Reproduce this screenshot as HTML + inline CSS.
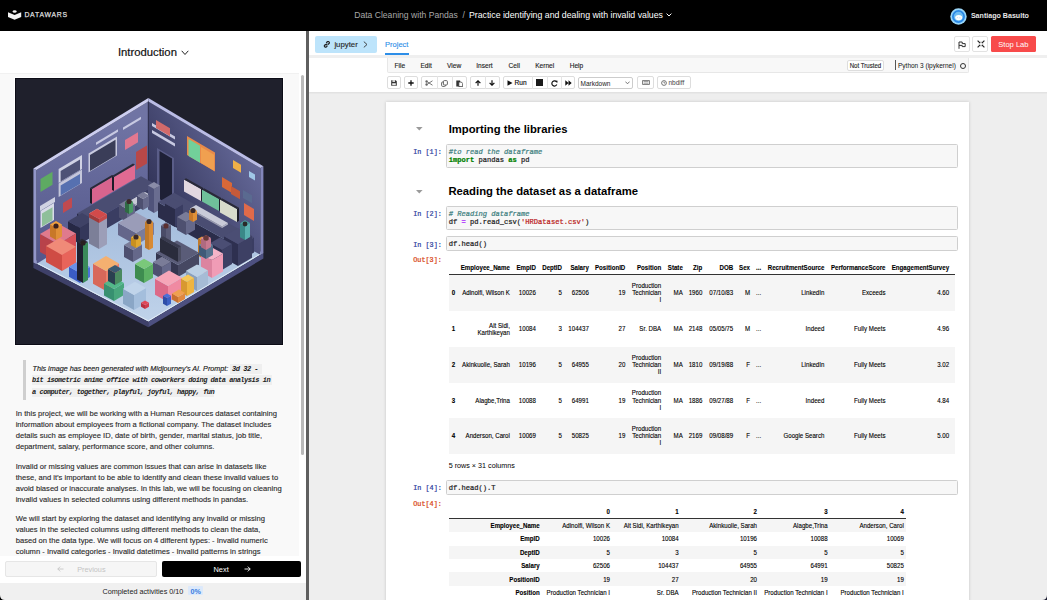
<!DOCTYPE html>
<html><head><meta charset="utf-8">
<style>
*{box-sizing:border-box;margin:0;padding:0}
html,body{width:1047px;height:600px;overflow:hidden;background:#fff;font-family:"Liberation Sans",sans-serif;color:#222}
.a{position:absolute;white-space:pre}
#top{position:absolute;left:0;top:0;width:1047px;height:31px;background:#000}
#left{position:absolute;left:0;top:31px;width:306px;height:569px;background:#fff}
#lhead{position:absolute;left:0;top:0;width:306px;height:41px;background:#fff}
#lcontent{position:absolute;left:0;top:41px;width:299px;height:484px;background:#f9f9f9;overflow:hidden}
#divider{position:absolute;left:306px;top:31px;width:3px;height:569px;background:#5f5f5f}
#right{position:absolute;left:309px;top:31px;width:738px;height:569px;background:#eee;overflow:hidden}
.p{position:absolute;left:15.7px;font-size:7.6px;color:#2a2a2a;-webkit-text-stroke:0.12px #2a2a2a;white-space:pre;line-height:11.1px}
.btn{position:absolute;border:1px solid #ddd;border-radius:2px;background:#fff}
.mono{font-family:"Liberation Mono",monospace}
.cellbox{position:absolute;left:445.5px;width:513px;background:#f7f7f7;border:1px solid #cfcfcf;border-radius:1px}
.prompt{position:absolute;font-family:"Liberation Mono",monospace;font-size:6.8px;color:#303f9f;white-space:pre;text-align:right}
.oprompt{color:#d84315}
.code{position:absolute;font-family:"Liberation Mono",monospace;font-size:7.1px;color:#000;white-space:pre;line-height:8.6px}
.h{position:absolute;font-weight:bold;font-size:11.3px;color:#000;white-space:pre}
.tri{position:absolute;width:0;height:0;border-left:3.3px solid transparent;border-right:3.3px solid transparent;border-top:3.6px solid #999}
.t{position:absolute;font-size:6.15px;color:#000;white-space:pre;text-align:right;line-height:7.1px}
.tb{font-weight:bold}
</style></head><body>

<!-- TOP BAR -->
<div id="top">
  <svg style="position:absolute;left:8px;top:10px" width="14" height="10" viewBox="0 0 14 10">
    <path d="M0 2.3 L6.6 4.9 L13.2 2.3 L13.2 6.9 L6.6 9.8 L0 6.9 Z" fill="#f2f2f2"/>
    <ellipse cx="6.6" cy="1.5" rx="2" ry="1.25" fill="#f2f2f2"/>
  </svg>
  <div class="a" style="left:24.4px;top:11.4px;font-size:6.9px;font-weight:normal;-webkit-text-stroke:0.25px #ddd;color:#ddd;letter-spacing:0.75px;line-height:7px">DATAWARS</div>
  <div class="a" style="left:354.2px;top:10px;font-size:8.6px;color:#a8a8a8;line-height:10px">Data Cleaning with Pandas</div>
  <div class="a" style="left:462.5px;top:10px;font-size:8.6px;color:#a8a8a8;line-height:10px">/</div>
  <div class="a" style="left:468.9px;top:10px;font-size:8.75px;color:#fff;line-height:10px">Practice identifying and dealing with invalid values</div>
  <svg style="position:absolute;left:665.5px;top:13px" width="6" height="4" viewBox="0 0 6 4"><path d="M0.6 0.6 L3 3 L5.4 0.6" stroke="#fff" stroke-width="1" fill="none"/></svg>
  <svg style="position:absolute;left:950px;top:7.6px" width="17" height="17" viewBox="0 0 17 17">
    <circle cx="8.5" cy="8.5" r="8.2" fill="#9ad6f8"/>
    <circle cx="8.5" cy="8.5" r="5.6" fill="#6fbdf2" stroke="#2a88e6" stroke-width="1.8"/>
    <ellipse cx="8.7" cy="9.6" rx="3.5" ry="2.6" fill="#fff"/>
    <path d="M6.8 10 Q7.5 9.2 8.2 10 M9.2 10 Q9.9 9.2 10.6 10" stroke="#9cc8ee" stroke-width="0.6" fill="none"/>
  </svg>
  <div class="a" style="left:970.9px;top:11.5px;font-size:7.1px;font-weight:bold;color:#e6e6e6;line-height:8px">Santiago Basulto</div>
</div>

<!-- LEFT PANEL -->
<div id="left">
  <div id="lhead">
    <div class="a" style="left:117.9px;top:15px;font-size:11.3px;color:#111;-webkit-text-stroke:0.2px #111;line-height:13px">Introduction</div>
    <svg style="position:absolute;left:180.5px;top:19px" width="8" height="6" viewBox="0 0 8 6"><path d="M0.7 0.8 L4 4.5 L7.3 0.8" stroke="#222" stroke-width="1" fill="none"/></svg>
  </div>
  <div id="lcontent"><div style="position:absolute;left:0;top:0;width:299px;height:1.2px;background:#fff"></div><div style="position:absolute;left:0;top:1.2px;width:299px;height:0.8px;background:#f1f1f1"></div>
    <!-- image placeholder -->
    <div id="imgwrap" style="position:absolute;left:15px;top:6px;width:268px;height:267px;background:#1f202c;overflow:hidden;box-shadow:0 0 0 1px #fff"><svg width="268" height="267" viewBox="0 0 268 267" style="position:absolute;left:0;top:0"><defs><linearGradient id="lw" gradientUnits="userSpaceOnUse" x1="60" y1="40" x2="60" y2="190"><stop offset="0" stop-color="#7074a4"/><stop offset="1" stop-color="#52568a"/></linearGradient><linearGradient id="rw" gradientUnits="userSpaceOnUse" x1="140" y1="120" x2="250" y2="60"><stop offset="0" stop-color="#33355a"/><stop offset="1" stop-color="#6e72a4"/></linearGradient><linearGradient id="fl" gradientUnits="userSpaceOnUse" x1="0" y1="120" x2="0" y2="245"><stop offset="0" stop-color="#a0b9da"/><stop offset="1" stop-color="#c0d3ea"/></linearGradient></defs><polygon points="18.4,184.3 133.3,243.7 248.4,175.0 133.3,116.0" fill="url(#fl)"/><polygon points="18.4,184.3 133.3,243.7 133.3,249.2 18.4,190.0" fill="#3e4069"/><polygon points="133.3,243.7 248.4,175.0 248.4,180.5 133.3,249.2" fill="#4d5080"/><polyline points="21.0,184.5 133.3,242.8 246.0,175.5" fill="none" stroke="#e4edf7" stroke-width="0.9"/><polygon points="21.4,92.0 133.3,23.5 133.3,116.0 21.4,186.0" fill="url(#lw)"/><polygon points="133.3,23.5 245.4,90.1 245.4,176.8 133.3,116.0" fill="url(#rw)"/><polygon points="18.4,90.4 21.4,92.0 21.4,186.0 18.4,184.3" fill="#9296c8"/><polygon points="245.4,90.1 248.4,88.3 248.4,175.0 245.4,176.8" fill="#8386ba"/><polygon points="18.4,90.4 133.3,20.0 133.3,23.5 21.4,92.0" fill="#cdcef0"/><polygon points="133.3,20.0 248.4,88.3 245.4,90.1 133.3,23.5" fill="#babce6"/><polygon points="132.8,23.5 133.8,23.5 133.8,116.0 132.8,116.0" fill="#2c2e4c"/><polygon points="43.6,105.0 67.0,91.0 67.0,77.0 43.6,91.0" fill="#d0d2e4"/><polygon points="45.6,103.5 65.0,91.9 65.0,81.4 45.6,93.0" fill="#4e5276"/><polygon points="43.6,119.0 67.0,105.0 67.0,91.5 43.6,105.5" fill="#c4c6da"/><polygon points="45.6,117.5 65.0,105.9 65.0,95.9 45.6,107.5" fill="#5670b0"/><polygon points="73.5,94.5 102.0,77.4 102.0,58.4 73.5,75.5" fill="#c9cbe0"/><polygon points="75.0,93.0 100.5,77.7 100.5,61.7 75.0,77.0" fill="#3a3d58"/><polygon points="25.5,114.0 37.5,106.8 37.5,93.8 25.5,101.0" fill="#5eaa62"/><polygon points="25.0,133.0 40.0,124.0 40.0,119.0 25.0,128.0" fill="#cfd1e2"/><polygon points="25.5,150.0 39.0,141.9 39.0,124.9 25.5,133.0" fill="#d8dae8"/><polygon points="27.0,148.5 37.5,142.2 37.5,129.2 27.0,135.5" fill="#8fbf9a"/><polygon points="48.0,135.0 57.0,129.6 57.0,119.6 48.0,125.0" fill="#c04a50"/><polygon points="110.0,72.0 123.0,64.2 123.0,54.2 110.0,62.0" fill="#e27890"/><polygon points="121.0,92.0 132.0,85.4 132.0,67.4 121.0,74.0" fill="#b84848"/><polygon points="81.0,67.0 103.0,53.8 103.0,51.3 81.0,64.5" fill="#c7c9e2"/><polygon points="108.0,52.0 126.0,41.2 126.0,38.7 108.0,49.5" fill="#c7c9e2"/><polygon points="142.0,122.0 159.0,132.0 159.0,80.0 142.0,70.0" fill="#5a5d88"/><polygon points="144.5,121.0 157.0,128.4 157.0,80.4 144.5,73.0" fill="#1e2036"/><polygon points="137.0,48.0 160.0,61.6 160.0,58.6 137.0,45.0" fill="#c7c9e2"/><polygon points="137.0,55.0 160.0,68.6 160.0,65.6 137.0,52.0" fill="#c7c9e2"/><polygon points="141.0,50.0 155.0,58.3 155.0,50.3 141.0,42.0" fill="#d26a6a"/><polygon points="172.0,77.0 200.0,93.5 200.0,74.5 172.0,58.0" fill="#e88a4a"/><polygon points="173.5,78.0 185.0,84.8 185.0,67.8 173.5,61.0" fill="#72d09a"/><polygon points="186.0,85.0 199.0,92.7 199.0,76.7 186.0,69.0" fill="#f0a050"/><polygon points="207.0,109.0 217.0,114.9 217.0,104.9 207.0,99.0" fill="#d86838"/><polygon points="216.0,116.0 225.0,121.3 225.0,113.3 216.0,108.0" fill="#c55a3a"/><polygon points="228.0,120.0 237.0,125.3 237.0,117.3 228.0,112.0" fill="#5a6a90"/><polygon points="229.0,137.0 239.0,142.9 239.0,130.9 229.0,125.0" fill="#e06a4a"/><polygon points="218.0,90.0 226.0,94.7 226.0,86.7 218.0,82.0" fill="#f0b048"/><polygon points="234.0,99.0 240.0,102.5 240.0,96.5 234.0,93.0" fill="#a0c8e8"/><polygon points="62.0,150.6 77.0,159.0 77.0,144.0 62.0,135.6" fill="#2b2d4a"/><polygon points="77.0,159.0 141.0,121.6 141.0,106.6 77.0,144.0" fill="#3a3d62"/><polygon points="62.0,135.6 77.0,144.0 141.0,106.6 126.0,98.2" fill="#4a4d72"/><polygon points="53.0,159.3 65.0,166.0 65.0,150.0 53.0,143.3" fill="#262844"/><polygon points="65.0,166.0 79.0,157.8 79.0,141.8 65.0,150.0" fill="#34375a"/><polygon points="53.0,143.3 65.0,150.0 79.0,141.8 67.0,135.1" fill="#3f4266"/><polygon points="75.0,124.9 77.0,126.0 77.0,111.0 75.0,109.9" fill="#1c1c28"/><polygon points="77.0,126.0 99.0,113.1 99.0,98.1 77.0,111.0" fill="#d8648e"/><polygon points="75.0,109.9 77.0,111.0 99.0,98.1 97.0,97.0" fill="#2a2a38"/><polygon points="97.0,111.9 99.0,113.0 99.0,99.0 97.0,97.9" fill="#1c1c28"/><polygon points="99.0,113.0 120.0,100.7 120.0,86.7 99.0,99.0" fill="#e06a92"/><polygon points="97.0,97.9 99.0,99.0 120.0,86.7 118.0,85.6" fill="#2a2a38"/><polygon points="104.0,130.6 110.0,134.0 110.0,132.5 104.0,129.1" fill="#9a9cb0"/><polygon points="110.0,134.0 136.0,118.8 136.0,117.3 110.0,132.5" fill="#b0b2c6"/><polygon points="104.0,129.1 110.0,132.5 136.0,117.3 130.0,113.9" fill="#c9cbd8"/><polygon points="74.0,165.4 84.0,171.0 84.0,141.0 74.0,135.4" fill="#7c7f98"/><polygon points="84.0,171.0 92.0,166.3 92.0,136.3 84.0,141.0" fill="#9c9eb8"/><polygon points="74.0,135.4 84.0,141.0 92.0,136.3 82.0,130.7" fill="#c8cad8"/><polygon points="74.0,139.4 84.0,145.0 84.0,141.0 74.0,135.4" fill="#a03a3a"/><polygon points="84.0,145.0 92.0,140.3 92.0,136.3 84.0,141.0" fill="#c44a4a"/><polygon points="74.0,135.4 84.0,141.0 92.0,136.3 82.0,130.7" fill="#d24a4a"/><polygon points="133.0,131.6 139.0,135.0 139.0,111.0 133.0,107.6" fill="#50537a"/><polygon points="139.0,135.0 145.0,131.5 145.0,107.5 139.0,111.0" fill="#6a6d90"/><polygon points="133.0,107.6 139.0,111.0 145.0,107.5 139.0,104.1" fill="#8a8ca8"/><polygon points="104.0,139.5 112.0,144.0 112.0,131.0 104.0,126.5" fill="#4e5070"/><polygon points="112.0,144.0 120.0,139.3 120.0,126.3 112.0,131.0" fill="#65688a"/><polygon points="104.0,126.5 112.0,131.0 120.0,126.3 112.0,121.8" fill="#7a7c98"/><polygon points="122.0,128.6 128.0,132.0 128.0,121.0 122.0,117.6" fill="#4e5070"/><polygon points="128.0,132.0 134.0,128.5 134.0,117.5 128.0,121.0" fill="#65688a"/><polygon points="122.0,117.6 128.0,121.0 134.0,117.5 128.0,114.1" fill="#7a7c98"/><polygon points="143.0,139.2 223.0,184.0 223.0,169.0 143.0,124.2" fill="#2b2d4a"/><polygon points="223.0,184.0 239.0,174.6 239.0,159.6 223.0,169.0" fill="#3a3d62"/><polygon points="143.0,124.2 223.0,169.0 239.0,159.6 159.0,114.8" fill="#4a4d72"/><polygon points="169.0,113.5 186.0,123.0 186.0,111.0 169.0,101.5" fill="#e3d8e0"/><polygon points="186.0,123.0 188.0,121.8 188.0,109.8 186.0,111.0" fill="#1c1c28"/><polygon points="169.0,101.5 186.0,111.0 188.0,109.8 171.0,100.3" fill="#2a2a38"/><polygon points="187.0,123.5 204.0,133.0 204.0,121.0 187.0,111.5" fill="#6fc09a"/><polygon points="204.0,133.0 206.0,131.8 206.0,119.8 204.0,121.0" fill="#1c1c28"/><polygon points="187.0,111.5 204.0,121.0 206.0,119.8 189.0,110.3" fill="#2a2a38"/><polygon points="205.0,134.5 222.0,144.0 222.0,131.0 205.0,121.5" fill="#d8dccc"/><polygon points="222.0,144.0 224.0,142.8 224.0,129.8 222.0,131.0" fill="#1c1c28"/><polygon points="205.0,121.5 222.0,131.0 224.0,129.8 207.0,120.3" fill="#2a2a38"/><polygon points="175.0,132.1 207.0,150.0 207.0,148.5 175.0,130.6" fill="#9a9cb0"/><polygon points="207.0,150.0 213.0,146.5 213.0,145.0 207.0,148.5" fill="#b0b2c6"/><polygon points="175.0,130.6 207.0,148.5 213.0,145.0 181.0,127.1" fill="#c9cbd8"/><polygon points="150.0,143.4 160.0,149.0 160.0,131.0 150.0,125.4" fill="#2b2d4a"/><polygon points="160.0,149.0 168.0,144.3 168.0,126.3 160.0,131.0" fill="#3a3d62"/><polygon points="150.0,125.4 160.0,131.0 168.0,126.3 158.0,120.7" fill="#4a4d72"/><polygon points="209.0,180.2 223.0,188.0 223.0,166.0 209.0,158.2" fill="#2e3050"/><polygon points="223.0,188.0 237.0,179.8 237.0,157.8 223.0,166.0" fill="#3d4064"/><polygon points="209.0,158.2 223.0,166.0 237.0,157.8 223.0,150.0" fill="#4b4e74"/><polygon points="195.0,185.3 207.0,192.0 207.0,172.0 195.0,165.3" fill="#2e3050"/><polygon points="207.0,192.0 217.0,186.1 217.0,166.1 207.0,172.0" fill="#3d4064"/><polygon points="195.0,165.3 207.0,172.0 217.0,166.1 205.0,159.4" fill="#4b4e74"/><polygon points="162.0,152.0 171.0,157.0 171.0,144.0 162.0,139.0" fill="#4e5070"/><polygon points="171.0,157.0 180.0,151.7 180.0,138.7 171.0,144.0" fill="#65688a"/><polygon points="162.0,139.0 171.0,144.0 180.0,138.7 171.0,133.7" fill="#7a7c98"/><polygon points="225.0,159.2 230.0,162.0 230.0,148.0 225.0,145.2" fill="#3a8888"/><polygon points="230.0,162.0 235.0,159.1 235.0,145.1 230.0,148.0" fill="#5ab0b0"/><polygon points="225.0,145.2 230.0,148.0 235.0,145.1 230.0,142.3" fill="#4aa0a0"/><polygon points="103.0,156.9 121.0,167.0 121.0,155.0 103.0,144.9" fill="#64668a"/><polygon points="121.0,167.0 139.0,156.5 139.0,144.5 121.0,155.0" fill="#7a7c9c"/><polygon points="103.0,144.9 121.0,155.0 139.0,144.5 121.0,134.4" fill="#9a9cb8"/><polygon points="109.0,179.0 118.0,184.0 118.0,172.0 109.0,167.0" fill="#4e5070"/><polygon points="118.0,184.0 127.0,178.7 127.0,166.7 118.0,172.0" fill="#65688a"/><polygon points="109.0,167.0 118.0,172.0 127.0,166.7 118.0,161.7" fill="#7a7c98"/><polygon points="130.0,169.8 134.0,172.0 134.0,146.0 130.0,143.8" fill="#c07a2a"/><polygon points="134.0,172.0 138.0,169.7 138.0,143.7 134.0,146.0" fill="#d88a34"/><polygon points="130.0,143.8 134.0,146.0 138.0,143.7 134.0,141.4" fill="#e89a3a"/><polygon points="146.0,177.2 151.0,180.0 151.0,150.0 146.0,147.2" fill="#4a4c68"/><polygon points="151.0,180.0 156.0,177.1 156.0,147.1 151.0,150.0" fill="#5a5c78"/><polygon points="146.0,147.2 151.0,150.0 156.0,147.1 151.0,144.3" fill="#6a6c88"/><polygon points="183.0,177.8 187.0,180.0 187.0,163.0 183.0,160.8" fill="#c07a2a"/><polygon points="187.0,180.0 191.0,177.7 191.0,160.7 187.0,163.0" fill="#d88a34"/><polygon points="183.0,160.8 187.0,163.0 191.0,160.7 187.0,158.4" fill="#e89a3a"/><polygon points="141.0,186.7 163.0,199.0 163.0,187.0 141.0,174.7" fill="#34364f"/><polygon points="163.0,199.0 184.0,186.7 184.0,174.7 163.0,187.0" fill="#464862"/><polygon points="141.0,174.7 163.0,187.0 184.0,174.7 162.0,162.4" fill="#5a5c78"/><polygon points="145.0,173.9 163.0,184.0 163.0,170.0 145.0,159.9" fill="#2a2c3c"/><polygon points="163.0,184.0 166.0,182.2 166.0,168.2 163.0,170.0" fill="#4a4c60"/><polygon points="145.0,159.9 163.0,170.0 166.0,168.2 148.0,158.2" fill="#3a3c50"/><polygon points="138.0,196.0 147.0,201.0 147.0,189.0 138.0,184.0" fill="#4e5070"/><polygon points="147.0,201.0 156.0,195.7 156.0,183.7 147.0,189.0" fill="#65688a"/><polygon points="138.0,184.0 147.0,189.0 156.0,183.7 147.0,178.7" fill="#7a7c98"/><polygon points="186.0,193.8 197.0,200.0 197.0,182.0 186.0,175.8" fill="#dc84a0"/><polygon points="197.0,200.0 208.0,193.6 208.0,175.6 197.0,182.0" fill="#f09cb6"/><polygon points="186.0,175.8 197.0,182.0 208.0,175.6 197.0,169.4" fill="#f4b4c8"/><polygon points="184.0,177.1 191.0,181.0 191.0,171.0 184.0,167.1" fill="#3f5a78"/><polygon points="191.0,181.0 198.0,176.9 198.0,166.9 191.0,171.0" fill="#56728e"/><polygon points="184.0,167.1 191.0,171.0 198.0,166.9 191.0,163.0" fill="#6d8aa6"/><polygon points="25.0,173.9 43.0,184.0 43.0,166.0 25.0,155.9" fill="#b8424a"/><polygon points="43.0,184.0 61.0,173.5 61.0,155.5 43.0,166.0" fill="#d65058"/><polygon points="25.0,155.9 43.0,166.0 61.0,155.5 43.0,145.4" fill="#e07a8c"/><polygon points="31.0,184.0 47.0,193.0 47.0,177.0 31.0,168.0" fill="#cf4c44"/><polygon points="47.0,193.0 61.0,184.8 61.0,168.8 47.0,177.0" fill="#e8645a"/><polygon points="31.0,168.0 47.0,177.0 61.0,168.8 45.0,159.9" fill="#f08a78"/><polygon points="35.0,158.6 41.0,162.0 41.0,150.0 35.0,146.6" fill="#c87828"/><polygon points="41.0,162.0 47.0,158.5 47.0,146.5 41.0,150.0" fill="#e09038"/><polygon points="35.0,146.6 41.0,150.0 47.0,146.5 41.0,143.1" fill="#f0a040"/><polygon points="54.0,198.8 65.0,205.0 65.0,195.0 54.0,188.8" fill="#3a5cc4"/><polygon points="65.0,205.0 75.0,199.1 75.0,189.1 65.0,195.0" fill="#4a70d8"/><polygon points="54.0,188.8 65.0,195.0 75.0,189.1 64.0,183.0" fill="#6a90e8"/><polygon points="62.0,201.6 68.0,205.0 68.0,167.0 62.0,163.6" fill="#1e2030"/><polygon points="68.0,205.0 73.0,202.1 73.0,164.1 68.0,167.0" fill="#3a8a5a"/><polygon points="62.0,163.6 68.0,167.0 73.0,164.1 67.0,160.7" fill="#2a2c38"/><polygon points="78.0,205.7 91.0,213.0 91.0,193.0 78.0,185.7" fill="#d8685a"/><polygon points="91.0,213.0 104.0,205.4 104.0,185.4 91.0,193.0" fill="#ec806a"/><polygon points="78.0,185.7 91.0,193.0 104.0,185.4 91.0,178.1" fill="#f4b070"/><polygon points="89.0,217.4 99.0,223.0 99.0,211.0 89.0,205.4" fill="#379070"/><polygon points="99.0,223.0 109.0,217.1 109.0,205.1 99.0,211.0" fill="#48a67c"/><polygon points="89.0,205.4 99.0,211.0 109.0,205.1 99.0,199.5" fill="#52b88a"/><polygon points="93.0,203.1 100.0,207.0 100.0,195.0 93.0,191.1" fill="#2a4050"/><polygon points="100.0,207.0 107.0,202.9 107.0,190.9 100.0,195.0" fill="#4a8a60"/><polygon points="93.0,191.1 100.0,195.0 107.0,190.9 100.0,187.0" fill="#3a5a70"/><polygon points="108.0,225.8 119.0,232.0 119.0,217.0 108.0,210.8" fill="#8aa6c6"/><polygon points="119.0,232.0 131.0,225.0 131.0,210.0 119.0,217.0" fill="#a4bedc"/><polygon points="108.0,210.8 119.0,217.0 131.0,210.0 120.0,203.8" fill="#c0d4ea"/><polygon points="120.0,200.0 129.0,205.0 129.0,191.0 120.0,186.0" fill="#3e8c50"/><polygon points="129.0,205.0 138.0,199.7 138.0,185.7 129.0,191.0" fill="#5cb064"/><polygon points="120.0,186.0 129.0,191.0 138.0,185.7 129.0,180.7" fill="#7ac87a"/><polygon points="140.0,216.7 153.0,224.0 153.0,208.0 140.0,200.7" fill="#dc6a88"/><polygon points="153.0,224.0 167.0,215.8 167.0,199.8 153.0,208.0" fill="#f08aa2"/><polygon points="140.0,200.7 153.0,208.0 167.0,199.8 154.0,192.5" fill="#f6a6b8"/><polygon points="171.0,206.8 182.0,213.0 182.0,199.0 171.0,192.8" fill="#8aa0bc"/><polygon points="182.0,213.0 193.0,206.6 193.0,192.6 182.0,199.0" fill="#a6bcd6"/><polygon points="171.0,192.8 182.0,199.0 193.0,192.6 182.0,186.4" fill="#bcd0e4"/><polygon points="166.0,214.6 172.0,218.0 172.0,204.0 166.0,200.6" fill="#d89830"/><polygon points="172.0,218.0 179.0,213.9 179.0,199.9 172.0,204.0" fill="#eeb440"/><polygon points="166.0,200.6 172.0,204.0 179.0,199.9 173.0,196.5" fill="#f6c858"/><polygon points="157.0,221.6 163.0,225.0 163.0,219.0 157.0,215.6" fill="#c87030"/><polygon points="163.0,225.0 170.0,220.9 170.0,214.9 163.0,219.0" fill="#e08840"/><polygon points="157.0,215.6 163.0,219.0 170.0,214.9 164.0,211.5" fill="#f0a050"/><polygon points="148.0,225.8 152.0,228.0 152.0,220.0 148.0,217.8" fill="#2e4ea8"/><polygon points="152.0,228.0 156.0,225.7 156.0,217.7 152.0,220.0" fill="#3c60c4"/><polygon points="148.0,217.8 152.0,220.0 156.0,217.7 152.0,215.4" fill="#4a70d8"/><polygon points="126.0,228.8 130.0,231.0 130.0,227.0 126.0,224.8" fill="#b83040"/><polygon points="130.0,231.0 134.0,228.7 134.0,224.7 130.0,227.0" fill="#d03c4c"/><polygon points="126.0,224.8 130.0,227.0 134.0,224.7 130.0,222.4" fill="#e04858"/><polygon points="110.0,133.8 114.0,136.0 114.0,126.0 110.0,123.8" fill="#2f6a44"/><polygon points="114.0,136.0 118.0,133.7 118.0,123.7 114.0,126.0" fill="#4a9a64"/><polygon points="110.0,123.8 114.0,126.0 118.0,123.7 114.0,121.4" fill="#3f8a5a"/><circle cx="114.0" cy="123.5" r="2.6" fill="#3a2a2a"/><polygon points="116.0,167.2 121.0,170.0 121.0,162.0 116.0,159.2" fill="#c89020"/><polygon points="121.0,170.0 126.0,167.1 126.0,159.1 121.0,162.0" fill="#e0a830"/><polygon points="116.0,159.2 121.0,162.0 126.0,159.1 121.0,156.3" fill="#f0b838"/><circle cx="121.0" cy="159.0" r="2.6" fill="#3a2a2a"/><circle cx="134.0" cy="143.5" r="2.6" fill="#3a2a2a"/><circle cx="151.0" cy="148.0" r="2.6" fill="#5a3030"/><polygon points="174.0,141.8 178.0,144.0 178.0,135.0 174.0,132.8" fill="#c87828"/><polygon points="178.0,144.0 182.0,141.7 182.0,132.7 178.0,135.0" fill="#e09038"/><polygon points="174.0,132.8 178.0,135.0 182.0,132.7 178.0,130.4" fill="#f0a040"/><circle cx="178.0" cy="132.5" r="2.6" fill="#3a2a2a"/><polygon points="186.0,169.2 191.0,172.0 191.0,163.0 186.0,160.2" fill="#b06a80"/><polygon points="191.0,172.0 196.0,169.1 196.0,160.1 191.0,163.0" fill="#c87a90"/><polygon points="186.0,160.2 191.0,163.0 196.0,160.1 191.0,157.3" fill="#d88aa0"/><circle cx="191.0" cy="160.0" r="2.8" fill="#6a3a3a"/><circle cx="230.0" cy="146.0" r="2.4" fill="#2a2a2a"/><circle cx="68.0" cy="165.0" r="2.6" fill="#2a2020"/><circle cx="41.0" cy="148.0" r="2.6" fill="#3a2020"/></svg><div style="position:absolute;left:0;top:0;width:268px;height:267px;border:1px solid #0c0c16"></div></div><!--imgend-->
    <!-- blockquote -->
    <div style="position:absolute;left:23.2px;top:288.4px;width:2.8px;height:39.2px;background:#cfcfcf"></div>
    <div class="a" style="left:32.5px;top:292px;font-size:7.2px;font-style:italic;color:#222;line-height:9px;font-weight:normal;-webkit-text-stroke:0.15px #222">This image has been generated with Midjourney’s AI. Prompt: </div>
    <div style="position:absolute;left:230.2px;top:292px;width:31.5px;height:9.6px;background:#efefef"></div>
    <div class="a mono" style="left:232px;top:293.6px;font-size:7px;letter-spacing:-0.48px;font-weight:bold;font-style:italic;color:#222;line-height:7px">3d 32 -</div>
    <div style="position:absolute;left:31.8px;top:303px;width:240px;height:9.6px;background:#efefef"></div>
    <div class="a mono" style="left:32px;top:305px;font-size:7px;letter-spacing:-0.48px;font-weight:bold;font-style:italic;color:#222;line-height:7px">bit isometric anime office with coworkers doing data analysis in</div>
    <div style="position:absolute;left:31.8px;top:315.5px;width:182.7px;height:9.6px;background:#efefef"></div>
    <div class="a mono" style="left:32px;top:316.6px;font-size:7px;letter-spacing:-0.48px;font-weight:bold;font-style:italic;color:#222;line-height:7px">a computer, together, playful, joyful, happy, fun</div>
    <!-- paragraphs -->
    <div class="p" style="top:336px">In this project, we will be working with a Human Resources dataset containing
information about employees from a fictional company. The dataset includes
details such as employee ID, date of birth, gender, marital status, job title,
department, salary, performance score, and other columns.</div>
    <div class="p" style="top:388.5px">Invalid or missing values are common issues that can arise in datasets like
these, and it’s important to be able to identify and clean these invalid values to
avoid biased or inaccurate analyses. In this lab, we will be focusing on cleaning
invalid values in selected columns using different methods in pandas.</div>
    <div class="p" style="top:440.5px">We will start by exploring the dataset and identifying any invalid or missing
values in the selected columns using different methods to clean the data,
based on the data type. We will focus on 4 different types: - Invalid numeric
column - Invalid categories - Invalid datetimes - Invalid patterns in strings</div>
  </div>
  <!-- scrollbar -->
  <div style="position:absolute;left:301px;top:44px;width:3px;height:380px;background:#b9b9b9;border-radius:1.5px"></div>
  <!-- bottom nav -->
  <div style="position:absolute;left:0;top:525px;width:306px;height:26px;background:#fff"></div>
  <div style="position:absolute;left:5.4px;top:530px;width:151.3px;height:16.4px;background:#f6f6f6;border:1px solid #e6e6e6;border-radius:2px"></div>
  <svg style="position:absolute;left:56.5px;top:534.5px" width="7" height="6" viewBox="0 0 7 6"><path d="M6.5 3 H0.8 M3.2 0.6 L0.8 3 L3.2 5.4" stroke="#c6c6c6" stroke-width="0.9" fill="none"/></svg>
  <div class="a" style="left:77.2px;top:534px;font-size:7.3px;color:#c4c4c4;line-height:9px">Previous</div>
  <div style="position:absolute;left:161.9px;top:530px;width:139.2px;height:16.4px;background:#000;border-radius:2px"></div>
  <div class="a" style="left:213.5px;top:534px;font-size:7.4px;color:#fff;line-height:9px">Next</div>
  <svg style="position:absolute;left:243.5px;top:534.5px" width="7" height="6" viewBox="0 0 7 6"><path d="M0.5 3 H6.2 M3.8 0.6 L6.2 3 L3.8 5.4" stroke="#fff" stroke-width="0.9" fill="none"/></svg>
  <div style="position:absolute;left:0;top:551.5px;width:306px;height:17.5px;background:#f0f0f0"></div>
  <div class="a" style="left:102.4px;top:556px;font-size:7.25px;color:#222;line-height:9px">Completed activities 0/10</div>
  <div style="position:absolute;left:188.2px;top:555.3px;width:15.3px;height:9.2px;background:#dce9fb;border-radius:1px"></div>
  <div class="a" style="left:190.5px;top:556px;font-size:7.2px;color:#3b7ddd;line-height:9px;font-weight:bold">0%</div>
</div>
<div id="divider"></div>

<!-- RIGHT PANEL -->
<div id="right">
  <div id="rhead" style="position:absolute;left:0;top:0;width:738px;height:60.5px;background:#fff"></div>
  <div style="position:absolute;left:0;top:23.5px;width:738px;height:3px;background:#efefef"></div>
  <div style="position:absolute;left:6.3px;top:5.3px;width:61.6px;height:16.3px;background:#bde4fb;border-radius:2px"></div>
  <svg style="position:absolute;left:14px;top:10px" width="7" height="7" viewBox="0 0 7 7"><path d="M3.2 1.8 L4.4 0.7 Q5.2 0 6 0.9 Q6.8 1.7 6 2.5 L4.9 3.6 M2.8 3.1 L1.7 4.2 Q0.9 5 1.8 5.8 Q2.6 6.6 3.4 5.8 L4.5 4.7 M2.6 4.3 L4.3 2.6" stroke="#222" stroke-width="1.2" fill="none"/></svg>
  <div class="a" style="left:25.4px;top:8.5px;font-size:7.8px;color:#2a2a2a;-webkit-text-stroke:0.15px #2a2a2a;line-height:9px">jupyter</div>
  <svg style="position:absolute;left:53.8px;top:9.8px" width="5" height="7" viewBox="0 0 5 7"><path d="M0.8 0.6 L4 3.5 L0.8 6.4" stroke="#333" stroke-width="0.9" fill="none"/></svg>
  <div class="a" style="left:76.1px;top:8.5px;font-size:7.5px;color:#2d8ee8;-webkit-text-stroke:0.12px #2d8ee8;line-height:9px">Project</div>
  <div style="position:absolute;left:76.1px;top:22.3px;width:23.6px;height:1.6px;background:#2d8ee8"></div>
  <!-- right buttons -->
  <div class="btn" style="left:644.9px;top:5.2px;width:16px;height:16.2px;border-color:#e2e2e2"></div>
  <svg style="position:absolute;left:649px;top:9.5px" width="8" height="8" viewBox="0 0 8 8"><path d="M1 7.8 V1 H4.2 V2.6 H7.2 V5.6 H4.2 V4.4 H1" stroke="#333" stroke-width="1" fill="none"/></svg>
  <div class="btn" style="left:663.4px;top:5.2px;width:16.1px;height:16.2px;border-color:#e2e2e2"></div>
  <svg style="position:absolute;left:667.5px;top:9.3px" width="8" height="8" viewBox="0 0 8 8"><path d="M0.6 0.6 L2.9 2.9 M7.4 0.6 L5.1 2.9 M0.6 7.4 L2.9 5.1 M7.4 7.4 L5.1 5.1" stroke="#222" stroke-width="1.2" fill="none"/><path d="M3.3 3.3 L1.6 3.3 L3.3 1.6 Z M4.7 3.3 L6.4 3.3 L4.7 1.6 Z M3.3 4.7 L1.6 4.7 L3.3 6.4 Z M4.7 4.7 L6.4 4.7 L4.7 6.4 Z" fill="#222"/></svg>
  <div style="position:absolute;left:682px;top:5.2px;width:44.8px;height:16.2px;background:#f84b4b;border-radius:1.5px"></div>
  <div class="a" style="left:689.3px;top:8.8px;font-size:7.55px;color:#fff;line-height:9px">Stop Lab</div>

  <!-- menubar -->
  <div style="position:absolute;left:77.5px;top:26.5px;width:582px;height:15.9px;background:#f8f8f8;border:1px solid #e7e7e7;border-top:none;border-radius:0 0 2px 2px"></div>
  <div class="a" style="left:85.6px;top:31.2px;font-size:6.6px;color:#222;-webkit-text-stroke:0.12px #222;line-height:8px">File</div>
  <div class="a" style="left:111.4px;top:31.2px;font-size:6.6px;color:#222;-webkit-text-stroke:0.12px #222;line-height:8px">Edit</div>
  <div class="a" style="left:138px;top:31.2px;font-size:6.6px;color:#222;-webkit-text-stroke:0.12px #222;line-height:8px">View</div>
  <div class="a" style="left:167.2px;top:31.2px;font-size:6.6px;color:#222;-webkit-text-stroke:0.12px #222;line-height:8px">Insert</div>
  <div class="a" style="left:199.5px;top:31.2px;font-size:6.6px;color:#222;-webkit-text-stroke:0.12px #222;line-height:8px">Cell</div>
  <div class="a" style="left:226.2px;top:31.2px;font-size:6.6px;color:#222;-webkit-text-stroke:0.12px #222;line-height:8px">Kernel</div>
  <div class="a" style="left:260.7px;top:31.2px;font-size:6.6px;color:#222;-webkit-text-stroke:0.12px #222;line-height:8px">Help</div>
  <div class="btn" style="left:537.6px;top:29px;width:37.9px;height:10.8px;border-color:#ddd"></div>
  <div class="a" style="left:540.7px;top:31.2px;font-size:6.1px;color:#222;-webkit-text-stroke:0.1px #222;transform:scaleY(1.12);transform-origin:0 6px;line-height:8px">Not Trusted</div>
  <div style="position:absolute;left:585.5px;top:29.3px;width:0.8px;height:9.5px;background:#555"></div>
  <div class="a" style="left:589px;top:31.2px;font-size:6.5px;color:#111;line-height:8px">Python 3 (ipykernel)</div>
  <div style="position:absolute;left:951px;top:31.5px;width:6px;height:6px;border:0.9px solid #333;border-radius:50%;left:651px"></div>

  <!-- toolbar -->
  <div id="toolbar"></div>
  <div style="position:absolute;left:0;top:60.5px;width:738px;height:1px;background:#e2e2e2"></div>
  <div style="position:absolute;left:0;top:61.5px;width:738px;height:1.5px;background:#e8e8e8"></div>

  <!-- notebook page -->
  <div id="page" style="position:absolute;left:76.5px;top:71px;width:583.5px;height:520px;background:#fff;box-shadow:0 0 3px rgba(0,0,0,0.18)"></div>
</div>

<!-- NOTEBOOK CONTENT (absolute page coords) -->

<div id="tbar">
  <div class="btn" style="left:386.9px;top:76.3px;width:14.3px;height:12.4px"></div>
  <svg class="ic" style="position:absolute;left:391px;top:80.2px" width="6" height="6" viewBox="0 0 6 6"><path d="M0.2 0.2 H4.7 L5.8 1.3 V5.8 H0.2 Z" fill="#333"/><rect x="1.4" y="0.2" width="2.6" height="1.7" fill="#e8e8e8"/><rect x="1.2" y="3.2" width="3.6" height="2" fill="#e8e8e8"/></svg>
  <div class="btn" style="left:404.4px;top:76.3px;width:13.8px;height:12.4px"></div>
  <svg style="position:absolute;left:408.3px;top:80.2px" width="6" height="6" viewBox="0 0 6 6"><path d="M3 0.3 V5.7 M0.3 3 H5.7" stroke="#111" stroke-width="1.3"/></svg>
  <div class="btn" style="left:421.2px;top:76.3px;width:45.6px;height:12.4px"></div>
  <div style="position:absolute;left:436.7px;top:76.3px;width:0.8px;height:12.4px;background:#e4e4e4"></div>
  <div style="position:absolute;left:452.2px;top:76.3px;width:0.8px;height:12.4px;background:#e4e4e4"></div>
  <svg style="position:absolute;left:424.7px;top:79.8px" width="8" height="6" viewBox="0 0 8 6"><circle cx="1.6" cy="1.5" r="1.2" fill="#666"/><circle cx="1.6" cy="4.5" r="1.2" fill="#666"/><path d="M2.5 2 L7.5 5.2 M2.5 4 L7.5 0.8" stroke="#666" stroke-width="0.9"/></svg>
  <svg style="position:absolute;left:440.7px;top:79.6px" width="7" height="7" viewBox="0 0 7 7"><rect x="0.6" y="2" width="4" height="4.4" rx="1" stroke="#555" stroke-width="0.9" fill="none"/><rect x="2.4" y="0.6" width="4" height="4.4" rx="1" stroke="#555" stroke-width="0.9" fill="#fff"/></svg>
  <svg style="position:absolute;left:456px;top:79.6px" width="7" height="7" viewBox="0 0 7 7"><rect x="0.3" y="0.5" width="3.8" height="6" fill="#333"/><path d="M2.8 2 H5.3 L6.7 3.4 V6.6 H2.8 Z" fill="#fff" stroke="#333" stroke-width="0.8"/></svg>
  <div class="btn" style="left:470.2px;top:76.3px;width:29.8px;height:12.4px"></div>
  <div style="position:absolute;left:485.4px;top:76.3px;width:0.8px;height:12.4px;background:#e4e4e4"></div>
  <svg style="position:absolute;left:475px;top:79.8px" width="6" height="6" viewBox="0 0 6 6"><path d="M3 5.8 V0.8 M0.6 3.2 L3 0.8 L5.4 3.2" stroke="#111" stroke-width="1.2" fill="none"/></svg>
  <svg style="position:absolute;left:489.4px;top:79.8px" width="6" height="6" viewBox="0 0 6 6"><path d="M3 0.2 V5.2 M0.6 2.8 L3 5.2 L5.4 2.8" stroke="#111" stroke-width="1.2" fill="none"/></svg>
  <div class="btn" style="left:502.9px;top:76.3px;width:72.6px;height:12.4px"></div>
  <div style="position:absolute;left:531.5px;top:76.3px;width:0.8px;height:12.4px;background:#e4e4e4"></div>
  <div style="position:absolute;left:546.8px;top:76.3px;width:0.8px;height:12.4px;background:#e4e4e4"></div>
  <div style="position:absolute;left:560.7px;top:76.3px;width:0.8px;height:12.4px;background:#e4e4e4"></div>
  <svg style="position:absolute;left:506.8px;top:79.8px" width="6" height="6" viewBox="0 0 6 6"><path d="M0.5 0.3 L5.5 3 L0.5 5.7 Z" fill="#111"/></svg>
  <div class="a" style="left:514.5px;top:78.5px;font-size:6.6px;color:#111;-webkit-text-stroke:0.15px #111;line-height:8px">Run</div>
  <div style="position:absolute;left:536.2px;top:79.3px;width:6.4px;height:6.4px;background:#1a1a1a"></div>
  <svg style="position:absolute;left:550.5px;top:79.6px" width="7" height="7" viewBox="0 0 7 7"><path d="M5.6 2 A2.6 2.6 0 1 0 5.8 4.6" stroke="#111" stroke-width="1.2" fill="none"/><path d="M4.2 0.6 L6.6 0.8 L6.2 3.2 Z" fill="#111"/></svg>
  <svg style="position:absolute;left:564.5px;top:80px" width="7" height="6" viewBox="0 0 7 6"><path d="M0.3 0.3 L3.5 3 L0.3 5.7 Z M3.5 0.3 L6.7 3 L3.5 5.7 Z" fill="#111"/></svg>
  <div style="position:absolute;left:577.9px;top:76.5px;width:54.9px;height:12.5px;background:#fff;border:1px solid #ccc;border-radius:2px"></div>
  <div class="a" style="left:580.5px;top:79.5px;font-size:6.5px;color:#222;line-height:8px">Markdown</div>
  <svg style="position:absolute;left:625px;top:81px" width="5" height="4" viewBox="0 0 5 4"><path d="M0.4 0.6 L2.5 2.8 L4.6 0.6" stroke="#555" stroke-width="0.8" fill="none"/></svg>
  <div class="btn" style="left:637.2px;top:76.3px;width:16.6px;height:12.4px"></div>
  <svg style="position:absolute;left:641.5px;top:80.3px" width="8" height="5" viewBox="0 0 8 5"><rect x="0.4" y="0.4" width="7.2" height="4.2" rx="0.6" fill="none" stroke="#555" stroke-width="0.8"/><path d="M1.5 1.6 H6.5 M1.5 3.2 H6.5" stroke="#555" stroke-width="0.6"/></svg>
  <div class="btn" style="left:656.6px;top:76.3px;width:34.8px;height:12.4px"></div>
  <svg style="position:absolute;left:660.5px;top:79.5px" width="6" height="6" viewBox="0 0 6 6"><circle cx="3" cy="3" r="2.4" stroke="#555" stroke-width="0.8" fill="none"/><path d="M3 1.6 V3 H4.2" stroke="#555" stroke-width="0.7" fill="none"/></svg>
  <div class="a" style="left:668.5px;top:78.6px;font-size:6.5px;color:#444;line-height:8px">nbdiff</div>
</div>

<div id="nb"><svg style="position:absolute;left:416px;top:127px" width="7" height="4" viewBox="0 0 7 4"><path d="M0 0 H6.6 L3.3 3.6 Z" fill="#9a9a9a"/></svg>
<div class="a" style="left:448.70px;top:122.55px;font-family:'Liberation Sans',sans-serif;font-size:11.25px;line-height:13.5px;font-weight:bold;color:#000">Importing the libraries</div>
<div style="position:absolute;left:445.5px;top:144.4px;width:512.80px;height:24.10px;background:#f7f7f7;border:1px solid #cfcfcf;border-radius:1.5px;box-sizing:border-box"></div>
<div class="a" style="right:605.20px;top:147.91px;font-family:'Liberation Mono',monospace;font-size:6.8px;line-height:8.16px;-webkit-text-stroke:0.22px currentColor;color:#303f9f">In&nbsp;[1]:</div>
<div class="a" style="left:448.70px;top:147.65px;font-family:'Liberation Mono',monospace;font-size:7.1px;line-height:8.52px;-webkit-text-stroke:0.22px currentColor;"><span style="color:#408080;font-style:italic">#to read the dataframe</span></div>
<div class="a" style="left:448.70px;top:156.25px;font-family:'Liberation Mono',monospace;font-size:7.1px;line-height:8.52px;-webkit-text-stroke:0.22px currentColor;"><span style="color:#008000;font-weight:bold">import</span> pandas <span style="color:#008000;font-weight:bold">as</span> pd</div>
<svg style="position:absolute;left:416px;top:189.6px" width="7" height="4" viewBox="0 0 7 4"><path d="M0 0 H6.6 L3.3 3.6 Z" fill="#9a9a9a"/></svg>
<div class="a" style="left:448.40px;top:184.70px;font-family:'Liberation Sans',sans-serif;font-size:11.3px;line-height:13.56px;font-weight:bold;color:#000">Reading the dataset as a dataframe</div>
<div style="position:absolute;left:445.5px;top:206px;width:512.80px;height:24.10px;background:#f7f7f7;border:1px solid #cfcfcf;border-radius:1.5px;box-sizing:border-box"></div>
<div class="a" style="right:605.20px;top:210.11px;font-family:'Liberation Mono',monospace;font-size:6.8px;line-height:8.16px;-webkit-text-stroke:0.22px currentColor;color:#303f9f">In&nbsp;[2]:</div>
<div class="a" style="left:448.70px;top:209.85px;font-family:'Liberation Mono',monospace;font-size:7.1px;line-height:8.52px;-webkit-text-stroke:0.22px currentColor;"><span style="color:#408080;font-style:italic"># Reading dataframe</span></div>
<div class="a" style="left:448.70px;top:218.05px;font-family:'Liberation Mono',monospace;font-size:7.1px;line-height:8.52px;-webkit-text-stroke:0.22px currentColor;">df <span style="color:#aa22ff">=</span> pd.read_csv(<span style="color:#ba2121">'HRDataset.csv'</span>)</div>
<div style="position:absolute;left:445.5px;top:235.8px;width:512.80px;height:15.70px;background:#f7f7f7;border:1px solid #cfcfcf;border-radius:1.5px;box-sizing:border-box"></div>
<div class="a" style="right:605.20px;top:240.61px;font-family:'Liberation Mono',monospace;font-size:6.8px;line-height:8.16px;-webkit-text-stroke:0.22px currentColor;color:#303f9f">In&nbsp;[3]:</div>
<div class="a" style="left:448.70px;top:240.35px;font-family:'Liberation Mono',monospace;font-size:7.1px;line-height:8.52px;-webkit-text-stroke:0.22px currentColor;">df.head()</div>
<div class="a" style="right:605.20px;top:256.11px;font-family:'Liberation Mono',monospace;font-size:6.8px;line-height:8.16px;-webkit-text-stroke:0.22px currentColor;color:#d84315">Out[3]:</div>
<div class="a" style="right:537.10px;top:264.18px;font-family:'Liberation Sans',sans-serif;font-size:6.15px;line-height:7.38px;transform:scaleY(1.15);transform-origin:0 5.82px;-webkit-text-stroke:0.1px currentColor;font-weight:bold;color:#000">Employee_Name</div>
<div class="a" style="right:511.10px;top:264.18px;font-family:'Liberation Sans',sans-serif;font-size:6.15px;line-height:7.38px;transform:scaleY(1.15);transform-origin:0 5.82px;-webkit-text-stroke:0.1px currentColor;font-weight:bold;color:#000">EmpID</div>
<div class="a" style="right:485.00px;top:264.18px;font-family:'Liberation Sans',sans-serif;font-size:6.15px;line-height:7.38px;transform:scaleY(1.15);transform-origin:0 5.82px;-webkit-text-stroke:0.1px currentColor;font-weight:bold;color:#000">DeptID</div>
<div class="a" style="right:458.20px;top:264.18px;font-family:'Liberation Sans',sans-serif;font-size:6.15px;line-height:7.38px;transform:scaleY(1.15);transform-origin:0 5.82px;-webkit-text-stroke:0.1px currentColor;font-weight:bold;color:#000">Salary</div>
<div class="a" style="right:421.70px;top:264.18px;font-family:'Liberation Sans',sans-serif;font-size:6.15px;line-height:7.38px;transform:scaleY(1.15);transform-origin:0 5.82px;-webkit-text-stroke:0.1px currentColor;font-weight:bold;color:#000">PositionID</div>
<div class="a" style="right:385.80px;top:264.18px;font-family:'Liberation Sans',sans-serif;font-size:6.15px;line-height:7.38px;transform:scaleY(1.15);transform-origin:0 5.82px;-webkit-text-stroke:0.1px currentColor;font-weight:bold;color:#000">Position</div>
<div class="a" style="right:364.20px;top:264.18px;font-family:'Liberation Sans',sans-serif;font-size:6.15px;line-height:7.38px;transform:scaleY(1.15);transform-origin:0 5.82px;-webkit-text-stroke:0.1px currentColor;font-weight:bold;color:#000">State</div>
<div class="a" style="right:344.70px;top:264.18px;font-family:'Liberation Sans',sans-serif;font-size:6.15px;line-height:7.38px;transform:scaleY(1.15);transform-origin:0 5.82px;-webkit-text-stroke:0.1px currentColor;font-weight:bold;color:#000">Zip</div>
<div class="a" style="right:313.80px;top:264.18px;font-family:'Liberation Sans',sans-serif;font-size:6.15px;line-height:7.38px;transform:scaleY(1.15);transform-origin:0 5.82px;-webkit-text-stroke:0.1px currentColor;font-weight:bold;color:#000">DOB</div>
<div class="a" style="right:297.00px;top:264.18px;font-family:'Liberation Sans',sans-serif;font-size:6.15px;line-height:7.38px;transform:scaleY(1.15);transform-origin:0 5.82px;-webkit-text-stroke:0.1px currentColor;font-weight:bold;color:#000">Sex</div>
<div class="a" style="right:285.90px;top:264.18px;font-family:'Liberation Sans',sans-serif;font-size:6.15px;line-height:7.38px;transform:scaleY(1.15);transform-origin:0 5.82px;-webkit-text-stroke:0.1px currentColor;font-weight:bold;color:#000">...</div>
<div class="a" style="right:222.60px;top:264.18px;font-family:'Liberation Sans',sans-serif;font-size:6.15px;line-height:7.38px;transform:scaleY(1.15);transform-origin:0 5.82px;-webkit-text-stroke:0.1px currentColor;font-weight:bold;color:#000">RecruitmentSource</div>
<div class="a" style="right:161.50px;top:264.18px;font-family:'Liberation Sans',sans-serif;font-size:6.15px;line-height:7.38px;transform:scaleY(1.15);transform-origin:0 5.82px;-webkit-text-stroke:0.1px currentColor;font-weight:bold;color:#000">PerformanceScore</div>
<div class="a" style="right:97.90px;top:264.18px;font-family:'Liberation Sans',sans-serif;font-size:6.15px;line-height:7.38px;transform:scaleY(1.15);transform-origin:0 5.82px;-webkit-text-stroke:0.1px currentColor;font-weight:bold;color:#000">EngagementSurvey</div>
<div style="position:absolute;left:448.9px;top:274.0px;width:505.90px;height:1.00px;background:#333"></div>
<div style="position:absolute;left:448.9px;top:275px;width:505.90px;height:35.80px;background:#f5f5f5"></div>
<div class="a" style="left:451.80px;top:289.28px;font-family:'Liberation Sans',sans-serif;font-size:6.15px;line-height:7.38px;transform:scaleY(1.15);transform-origin:0 5.82px;-webkit-text-stroke:0.1px currentColor;font-weight:bold;color:#000">0</div>
<div class="a" style="right:537.10px;top:289.28px;font-family:'Liberation Sans',sans-serif;font-size:6.15px;line-height:7.38px;transform:scaleY(1.15);transform-origin:0 5.82px;-webkit-text-stroke:0.1px currentColor;color:#000">Adinolfi, Wilson K</div>
<div class="a" style="right:511.10px;top:289.28px;font-family:'Liberation Sans',sans-serif;font-size:6.15px;line-height:7.38px;transform:scaleY(1.15);transform-origin:0 5.82px;-webkit-text-stroke:0.1px currentColor;color:#000">10026</div>
<div class="a" style="right:485.00px;top:289.28px;font-family:'Liberation Sans',sans-serif;font-size:6.15px;line-height:7.38px;transform:scaleY(1.15);transform-origin:0 5.82px;-webkit-text-stroke:0.1px currentColor;color:#000">5</div>
<div class="a" style="right:458.20px;top:289.28px;font-family:'Liberation Sans',sans-serif;font-size:6.15px;line-height:7.38px;transform:scaleY(1.15);transform-origin:0 5.82px;-webkit-text-stroke:0.1px currentColor;color:#000">62506</div>
<div class="a" style="right:421.70px;top:289.28px;font-family:'Liberation Sans',sans-serif;font-size:6.15px;line-height:7.38px;transform:scaleY(1.15);transform-origin:0 5.82px;-webkit-text-stroke:0.1px currentColor;color:#000">19</div>
<div class="a" style="right:385.80px;top:282.18px;font-family:'Liberation Sans',sans-serif;font-size:6.15px;line-height:7.38px;transform:scaleY(1.15);transform-origin:0 5.82px;-webkit-text-stroke:0.1px currentColor;color:#000">Production</div>
<div class="a" style="right:385.80px;top:289.28px;font-family:'Liberation Sans',sans-serif;font-size:6.15px;line-height:7.38px;transform:scaleY(1.15);transform-origin:0 5.82px;-webkit-text-stroke:0.1px currentColor;color:#000">Technician</div>
<div class="a" style="right:385.80px;top:296.38px;font-family:'Liberation Sans',sans-serif;font-size:6.15px;line-height:7.38px;transform:scaleY(1.15);transform-origin:0 5.82px;-webkit-text-stroke:0.1px currentColor;color:#000">I</div>
<div class="a" style="right:364.20px;top:289.28px;font-family:'Liberation Sans',sans-serif;font-size:6.15px;line-height:7.38px;transform:scaleY(1.15);transform-origin:0 5.82px;-webkit-text-stroke:0.1px currentColor;color:#000">MA</div>
<div class="a" style="right:344.70px;top:289.28px;font-family:'Liberation Sans',sans-serif;font-size:6.15px;line-height:7.38px;transform:scaleY(1.15);transform-origin:0 5.82px;-webkit-text-stroke:0.1px currentColor;color:#000">1960</div>
<div class="a" style="right:313.80px;top:289.28px;font-family:'Liberation Sans',sans-serif;font-size:6.15px;line-height:7.38px;transform:scaleY(1.15);transform-origin:0 5.82px;-webkit-text-stroke:0.1px currentColor;color:#000">07/10/83</div>
<div class="a" style="right:297.00px;top:289.28px;font-family:'Liberation Sans',sans-serif;font-size:6.15px;line-height:7.38px;transform:scaleY(1.15);transform-origin:0 5.82px;-webkit-text-stroke:0.1px currentColor;color:#000">M</div>
<div class="a" style="right:285.90px;top:289.28px;font-family:'Liberation Sans',sans-serif;font-size:6.15px;line-height:7.38px;transform:scaleY(1.15);transform-origin:0 5.82px;-webkit-text-stroke:0.1px currentColor;color:#000">...</div>
<div class="a" style="right:222.60px;top:289.28px;font-family:'Liberation Sans',sans-serif;font-size:6.15px;line-height:7.38px;transform:scaleY(1.15);transform-origin:0 5.82px;-webkit-text-stroke:0.1px currentColor;color:#000">LinkedIn</div>
<div class="a" style="right:161.50px;top:289.28px;font-family:'Liberation Sans',sans-serif;font-size:6.15px;line-height:7.38px;transform:scaleY(1.15);transform-origin:0 5.82px;-webkit-text-stroke:0.1px currentColor;color:#000">Exceeds</div>
<div class="a" style="right:97.90px;top:289.28px;font-family:'Liberation Sans',sans-serif;font-size:6.15px;line-height:7.38px;transform:scaleY(1.15);transform-origin:0 5.82px;-webkit-text-stroke:0.1px currentColor;color:#000">4.60</div>
<div class="a" style="left:451.80px;top:325.28px;font-family:'Liberation Sans',sans-serif;font-size:6.15px;line-height:7.38px;transform:scaleY(1.15);transform-origin:0 5.82px;-webkit-text-stroke:0.1px currentColor;font-weight:bold;color:#000">1</div>
<div class="a" style="right:537.10px;top:321.73px;font-family:'Liberation Sans',sans-serif;font-size:6.15px;line-height:7.38px;transform:scaleY(1.15);transform-origin:0 5.82px;-webkit-text-stroke:0.1px currentColor;color:#000">Ait Sidi,</div>
<div class="a" style="right:537.10px;top:328.83px;font-family:'Liberation Sans',sans-serif;font-size:6.15px;line-height:7.38px;transform:scaleY(1.15);transform-origin:0 5.82px;-webkit-text-stroke:0.1px currentColor;color:#000">Karthikeyan</div>
<div class="a" style="right:511.10px;top:325.28px;font-family:'Liberation Sans',sans-serif;font-size:6.15px;line-height:7.38px;transform:scaleY(1.15);transform-origin:0 5.82px;-webkit-text-stroke:0.1px currentColor;color:#000">10084</div>
<div class="a" style="right:485.00px;top:325.28px;font-family:'Liberation Sans',sans-serif;font-size:6.15px;line-height:7.38px;transform:scaleY(1.15);transform-origin:0 5.82px;-webkit-text-stroke:0.1px currentColor;color:#000">3</div>
<div class="a" style="right:458.20px;top:325.28px;font-family:'Liberation Sans',sans-serif;font-size:6.15px;line-height:7.38px;transform:scaleY(1.15);transform-origin:0 5.82px;-webkit-text-stroke:0.1px currentColor;color:#000">104437</div>
<div class="a" style="right:421.70px;top:325.28px;font-family:'Liberation Sans',sans-serif;font-size:6.15px;line-height:7.38px;transform:scaleY(1.15);transform-origin:0 5.82px;-webkit-text-stroke:0.1px currentColor;color:#000">27</div>
<div class="a" style="right:385.80px;top:325.28px;font-family:'Liberation Sans',sans-serif;font-size:6.15px;line-height:7.38px;transform:scaleY(1.15);transform-origin:0 5.82px;-webkit-text-stroke:0.1px currentColor;color:#000">Sr. DBA</div>
<div class="a" style="right:364.20px;top:325.28px;font-family:'Liberation Sans',sans-serif;font-size:6.15px;line-height:7.38px;transform:scaleY(1.15);transform-origin:0 5.82px;-webkit-text-stroke:0.1px currentColor;color:#000">MA</div>
<div class="a" style="right:344.70px;top:325.28px;font-family:'Liberation Sans',sans-serif;font-size:6.15px;line-height:7.38px;transform:scaleY(1.15);transform-origin:0 5.82px;-webkit-text-stroke:0.1px currentColor;color:#000">2148</div>
<div class="a" style="right:313.80px;top:325.28px;font-family:'Liberation Sans',sans-serif;font-size:6.15px;line-height:7.38px;transform:scaleY(1.15);transform-origin:0 5.82px;-webkit-text-stroke:0.1px currentColor;color:#000">05/05/75</div>
<div class="a" style="right:297.00px;top:325.28px;font-family:'Liberation Sans',sans-serif;font-size:6.15px;line-height:7.38px;transform:scaleY(1.15);transform-origin:0 5.82px;-webkit-text-stroke:0.1px currentColor;color:#000">M</div>
<div class="a" style="right:285.90px;top:325.28px;font-family:'Liberation Sans',sans-serif;font-size:6.15px;line-height:7.38px;transform:scaleY(1.15);transform-origin:0 5.82px;-webkit-text-stroke:0.1px currentColor;color:#000">...</div>
<div class="a" style="right:222.60px;top:325.28px;font-family:'Liberation Sans',sans-serif;font-size:6.15px;line-height:7.38px;transform:scaleY(1.15);transform-origin:0 5.82px;-webkit-text-stroke:0.1px currentColor;color:#000">Indeed</div>
<div class="a" style="right:161.50px;top:325.28px;font-family:'Liberation Sans',sans-serif;font-size:6.15px;line-height:7.38px;transform:scaleY(1.15);transform-origin:0 5.82px;-webkit-text-stroke:0.1px currentColor;color:#000">Fully Meets</div>
<div class="a" style="right:97.90px;top:325.28px;font-family:'Liberation Sans',sans-serif;font-size:6.15px;line-height:7.38px;transform:scaleY(1.15);transform-origin:0 5.82px;-webkit-text-stroke:0.1px currentColor;color:#000">4.96</div>
<div style="position:absolute;left:448.9px;top:347px;width:505.90px;height:35.80px;background:#f5f5f5"></div>
<div class="a" style="left:451.80px;top:361.28px;font-family:'Liberation Sans',sans-serif;font-size:6.15px;line-height:7.38px;transform:scaleY(1.15);transform-origin:0 5.82px;-webkit-text-stroke:0.1px currentColor;font-weight:bold;color:#000">2</div>
<div class="a" style="right:537.10px;top:361.28px;font-family:'Liberation Sans',sans-serif;font-size:6.15px;line-height:7.38px;transform:scaleY(1.15);transform-origin:0 5.82px;-webkit-text-stroke:0.1px currentColor;color:#000">Akinkuolie, Sarah</div>
<div class="a" style="right:511.10px;top:361.28px;font-family:'Liberation Sans',sans-serif;font-size:6.15px;line-height:7.38px;transform:scaleY(1.15);transform-origin:0 5.82px;-webkit-text-stroke:0.1px currentColor;color:#000">10196</div>
<div class="a" style="right:485.00px;top:361.28px;font-family:'Liberation Sans',sans-serif;font-size:6.15px;line-height:7.38px;transform:scaleY(1.15);transform-origin:0 5.82px;-webkit-text-stroke:0.1px currentColor;color:#000">5</div>
<div class="a" style="right:458.20px;top:361.28px;font-family:'Liberation Sans',sans-serif;font-size:6.15px;line-height:7.38px;transform:scaleY(1.15);transform-origin:0 5.82px;-webkit-text-stroke:0.1px currentColor;color:#000">64955</div>
<div class="a" style="right:421.70px;top:361.28px;font-family:'Liberation Sans',sans-serif;font-size:6.15px;line-height:7.38px;transform:scaleY(1.15);transform-origin:0 5.82px;-webkit-text-stroke:0.1px currentColor;color:#000">20</div>
<div class="a" style="right:385.80px;top:354.18px;font-family:'Liberation Sans',sans-serif;font-size:6.15px;line-height:7.38px;transform:scaleY(1.15);transform-origin:0 5.82px;-webkit-text-stroke:0.1px currentColor;color:#000">Production</div>
<div class="a" style="right:385.80px;top:361.28px;font-family:'Liberation Sans',sans-serif;font-size:6.15px;line-height:7.38px;transform:scaleY(1.15);transform-origin:0 5.82px;-webkit-text-stroke:0.1px currentColor;color:#000">Technician</div>
<div class="a" style="right:385.80px;top:368.38px;font-family:'Liberation Sans',sans-serif;font-size:6.15px;line-height:7.38px;transform:scaleY(1.15);transform-origin:0 5.82px;-webkit-text-stroke:0.1px currentColor;color:#000">II</div>
<div class="a" style="right:364.20px;top:361.28px;font-family:'Liberation Sans',sans-serif;font-size:6.15px;line-height:7.38px;transform:scaleY(1.15);transform-origin:0 5.82px;-webkit-text-stroke:0.1px currentColor;color:#000">MA</div>
<div class="a" style="right:344.70px;top:361.28px;font-family:'Liberation Sans',sans-serif;font-size:6.15px;line-height:7.38px;transform:scaleY(1.15);transform-origin:0 5.82px;-webkit-text-stroke:0.1px currentColor;color:#000">1810</div>
<div class="a" style="right:313.80px;top:361.28px;font-family:'Liberation Sans',sans-serif;font-size:6.15px;line-height:7.38px;transform:scaleY(1.15);transform-origin:0 5.82px;-webkit-text-stroke:0.1px currentColor;color:#000">09/19/88</div>
<div class="a" style="right:297.00px;top:361.28px;font-family:'Liberation Sans',sans-serif;font-size:6.15px;line-height:7.38px;transform:scaleY(1.15);transform-origin:0 5.82px;-webkit-text-stroke:0.1px currentColor;color:#000">F</div>
<div class="a" style="right:285.90px;top:361.28px;font-family:'Liberation Sans',sans-serif;font-size:6.15px;line-height:7.38px;transform:scaleY(1.15);transform-origin:0 5.82px;-webkit-text-stroke:0.1px currentColor;color:#000">...</div>
<div class="a" style="right:222.60px;top:361.28px;font-family:'Liberation Sans',sans-serif;font-size:6.15px;line-height:7.38px;transform:scaleY(1.15);transform-origin:0 5.82px;-webkit-text-stroke:0.1px currentColor;color:#000">LinkedIn</div>
<div class="a" style="right:161.50px;top:361.28px;font-family:'Liberation Sans',sans-serif;font-size:6.15px;line-height:7.38px;transform:scaleY(1.15);transform-origin:0 5.82px;-webkit-text-stroke:0.1px currentColor;color:#000">Fully Meets</div>
<div class="a" style="right:97.90px;top:361.28px;font-family:'Liberation Sans',sans-serif;font-size:6.15px;line-height:7.38px;transform:scaleY(1.15);transform-origin:0 5.82px;-webkit-text-stroke:0.1px currentColor;color:#000">3.02</div>
<div class="a" style="left:451.80px;top:396.58px;font-family:'Liberation Sans',sans-serif;font-size:6.15px;line-height:7.38px;transform:scaleY(1.15);transform-origin:0 5.82px;-webkit-text-stroke:0.1px currentColor;font-weight:bold;color:#000">3</div>
<div class="a" style="right:537.10px;top:396.58px;font-family:'Liberation Sans',sans-serif;font-size:6.15px;line-height:7.38px;transform:scaleY(1.15);transform-origin:0 5.82px;-webkit-text-stroke:0.1px currentColor;color:#000">Alagbe,Trina</div>
<div class="a" style="right:511.10px;top:396.58px;font-family:'Liberation Sans',sans-serif;font-size:6.15px;line-height:7.38px;transform:scaleY(1.15);transform-origin:0 5.82px;-webkit-text-stroke:0.1px currentColor;color:#000">10088</div>
<div class="a" style="right:485.00px;top:396.58px;font-family:'Liberation Sans',sans-serif;font-size:6.15px;line-height:7.38px;transform:scaleY(1.15);transform-origin:0 5.82px;-webkit-text-stroke:0.1px currentColor;color:#000">5</div>
<div class="a" style="right:458.20px;top:396.58px;font-family:'Liberation Sans',sans-serif;font-size:6.15px;line-height:7.38px;transform:scaleY(1.15);transform-origin:0 5.82px;-webkit-text-stroke:0.1px currentColor;color:#000">64991</div>
<div class="a" style="right:421.70px;top:396.58px;font-family:'Liberation Sans',sans-serif;font-size:6.15px;line-height:7.38px;transform:scaleY(1.15);transform-origin:0 5.82px;-webkit-text-stroke:0.1px currentColor;color:#000">19</div>
<div class="a" style="right:385.80px;top:389.48px;font-family:'Liberation Sans',sans-serif;font-size:6.15px;line-height:7.38px;transform:scaleY(1.15);transform-origin:0 5.82px;-webkit-text-stroke:0.1px currentColor;color:#000">Production</div>
<div class="a" style="right:385.80px;top:396.58px;font-family:'Liberation Sans',sans-serif;font-size:6.15px;line-height:7.38px;transform:scaleY(1.15);transform-origin:0 5.82px;-webkit-text-stroke:0.1px currentColor;color:#000">Technician</div>
<div class="a" style="right:385.80px;top:403.68px;font-family:'Liberation Sans',sans-serif;font-size:6.15px;line-height:7.38px;transform:scaleY(1.15);transform-origin:0 5.82px;-webkit-text-stroke:0.1px currentColor;color:#000">I</div>
<div class="a" style="right:364.20px;top:396.58px;font-family:'Liberation Sans',sans-serif;font-size:6.15px;line-height:7.38px;transform:scaleY(1.15);transform-origin:0 5.82px;-webkit-text-stroke:0.1px currentColor;color:#000">MA</div>
<div class="a" style="right:344.70px;top:396.58px;font-family:'Liberation Sans',sans-serif;font-size:6.15px;line-height:7.38px;transform:scaleY(1.15);transform-origin:0 5.82px;-webkit-text-stroke:0.1px currentColor;color:#000">1886</div>
<div class="a" style="right:313.80px;top:396.58px;font-family:'Liberation Sans',sans-serif;font-size:6.15px;line-height:7.38px;transform:scaleY(1.15);transform-origin:0 5.82px;-webkit-text-stroke:0.1px currentColor;color:#000">09/27/88</div>
<div class="a" style="right:297.00px;top:396.58px;font-family:'Liberation Sans',sans-serif;font-size:6.15px;line-height:7.38px;transform:scaleY(1.15);transform-origin:0 5.82px;-webkit-text-stroke:0.1px currentColor;color:#000">F</div>
<div class="a" style="right:285.90px;top:396.58px;font-family:'Liberation Sans',sans-serif;font-size:6.15px;line-height:7.38px;transform:scaleY(1.15);transform-origin:0 5.82px;-webkit-text-stroke:0.1px currentColor;color:#000">...</div>
<div class="a" style="right:222.60px;top:396.58px;font-family:'Liberation Sans',sans-serif;font-size:6.15px;line-height:7.38px;transform:scaleY(1.15);transform-origin:0 5.82px;-webkit-text-stroke:0.1px currentColor;color:#000">Indeed</div>
<div class="a" style="right:161.50px;top:396.58px;font-family:'Liberation Sans',sans-serif;font-size:6.15px;line-height:7.38px;transform:scaleY(1.15);transform-origin:0 5.82px;-webkit-text-stroke:0.1px currentColor;color:#000">Fully Meets</div>
<div class="a" style="right:97.90px;top:396.58px;font-family:'Liberation Sans',sans-serif;font-size:6.15px;line-height:7.38px;transform:scaleY(1.15);transform-origin:0 5.82px;-webkit-text-stroke:0.1px currentColor;color:#000">4.84</div>
<div style="position:absolute;left:448.9px;top:418.1px;width:505.90px;height:35.80px;background:#f5f5f5"></div>
<div class="a" style="left:451.80px;top:432.38px;font-family:'Liberation Sans',sans-serif;font-size:6.15px;line-height:7.38px;transform:scaleY(1.15);transform-origin:0 5.82px;-webkit-text-stroke:0.1px currentColor;font-weight:bold;color:#000">4</div>
<div class="a" style="right:537.10px;top:432.38px;font-family:'Liberation Sans',sans-serif;font-size:6.15px;line-height:7.38px;transform:scaleY(1.15);transform-origin:0 5.82px;-webkit-text-stroke:0.1px currentColor;color:#000">Anderson, Carol</div>
<div class="a" style="right:511.10px;top:432.38px;font-family:'Liberation Sans',sans-serif;font-size:6.15px;line-height:7.38px;transform:scaleY(1.15);transform-origin:0 5.82px;-webkit-text-stroke:0.1px currentColor;color:#000">10069</div>
<div class="a" style="right:485.00px;top:432.38px;font-family:'Liberation Sans',sans-serif;font-size:6.15px;line-height:7.38px;transform:scaleY(1.15);transform-origin:0 5.82px;-webkit-text-stroke:0.1px currentColor;color:#000">5</div>
<div class="a" style="right:458.20px;top:432.38px;font-family:'Liberation Sans',sans-serif;font-size:6.15px;line-height:7.38px;transform:scaleY(1.15);transform-origin:0 5.82px;-webkit-text-stroke:0.1px currentColor;color:#000">50825</div>
<div class="a" style="right:421.70px;top:432.38px;font-family:'Liberation Sans',sans-serif;font-size:6.15px;line-height:7.38px;transform:scaleY(1.15);transform-origin:0 5.82px;-webkit-text-stroke:0.1px currentColor;color:#000">19</div>
<div class="a" style="right:385.80px;top:425.28px;font-family:'Liberation Sans',sans-serif;font-size:6.15px;line-height:7.38px;transform:scaleY(1.15);transform-origin:0 5.82px;-webkit-text-stroke:0.1px currentColor;color:#000">Production</div>
<div class="a" style="right:385.80px;top:432.38px;font-family:'Liberation Sans',sans-serif;font-size:6.15px;line-height:7.38px;transform:scaleY(1.15);transform-origin:0 5.82px;-webkit-text-stroke:0.1px currentColor;color:#000">Technician</div>
<div class="a" style="right:385.80px;top:439.48px;font-family:'Liberation Sans',sans-serif;font-size:6.15px;line-height:7.38px;transform:scaleY(1.15);transform-origin:0 5.82px;-webkit-text-stroke:0.1px currentColor;color:#000">I</div>
<div class="a" style="right:364.20px;top:432.38px;font-family:'Liberation Sans',sans-serif;font-size:6.15px;line-height:7.38px;transform:scaleY(1.15);transform-origin:0 5.82px;-webkit-text-stroke:0.1px currentColor;color:#000">MA</div>
<div class="a" style="right:344.70px;top:432.38px;font-family:'Liberation Sans',sans-serif;font-size:6.15px;line-height:7.38px;transform:scaleY(1.15);transform-origin:0 5.82px;-webkit-text-stroke:0.1px currentColor;color:#000">2169</div>
<div class="a" style="right:313.80px;top:432.38px;font-family:'Liberation Sans',sans-serif;font-size:6.15px;line-height:7.38px;transform:scaleY(1.15);transform-origin:0 5.82px;-webkit-text-stroke:0.1px currentColor;color:#000">09/08/89</div>
<div class="a" style="right:297.00px;top:432.38px;font-family:'Liberation Sans',sans-serif;font-size:6.15px;line-height:7.38px;transform:scaleY(1.15);transform-origin:0 5.82px;-webkit-text-stroke:0.1px currentColor;color:#000">F</div>
<div class="a" style="right:285.90px;top:432.38px;font-family:'Liberation Sans',sans-serif;font-size:6.15px;line-height:7.38px;transform:scaleY(1.15);transform-origin:0 5.82px;-webkit-text-stroke:0.1px currentColor;color:#000">...</div>
<div class="a" style="right:222.60px;top:432.38px;font-family:'Liberation Sans',sans-serif;font-size:6.15px;line-height:7.38px;transform:scaleY(1.15);transform-origin:0 5.82px;-webkit-text-stroke:0.1px currentColor;color:#000">Google Search</div>
<div class="a" style="right:161.50px;top:432.38px;font-family:'Liberation Sans',sans-serif;font-size:6.15px;line-height:7.38px;transform:scaleY(1.15);transform-origin:0 5.82px;-webkit-text-stroke:0.1px currentColor;color:#000">Fully Meets</div>
<div class="a" style="right:97.90px;top:432.38px;font-family:'Liberation Sans',sans-serif;font-size:6.15px;line-height:7.38px;transform:scaleY(1.15);transform-origin:0 5.82px;-webkit-text-stroke:0.1px currentColor;color:#000">5.00</div>
<div class="a" style="left:448.70px;top:461.89px;font-family:'Liberation Sans',sans-serif;font-size:7.2px;line-height:8.64px;color:#000">5 rows × 31 columns</div>
<div style="position:absolute;left:445.5px;top:480.2px;width:512.80px;height:15.10px;background:#f7f7f7;border:1px solid #cfcfcf;border-radius:1.5px;box-sizing:border-box"></div>
<div class="a" style="right:605.20px;top:484.41px;font-family:'Liberation Mono',monospace;font-size:6.8px;line-height:8.16px;-webkit-text-stroke:0.22px currentColor;color:#303f9f">In&nbsp;[4]:</div>
<div class="a" style="left:448.70px;top:484.15px;font-family:'Liberation Mono',monospace;font-size:7.1px;line-height:8.52px;-webkit-text-stroke:0.22px currentColor;">df.head().T</div>
<div class="a" style="right:605.20px;top:499.51px;font-family:'Liberation Mono',monospace;font-size:6.8px;line-height:8.16px;-webkit-text-stroke:0.22px currentColor;color:#d84315">Out[4]:</div>
<div class="a" style="right:437.00px;top:507.58px;font-family:'Liberation Sans',sans-serif;font-size:6.15px;line-height:7.38px;transform:scaleY(1.15);transform-origin:0 5.82px;-webkit-text-stroke:0.1px currentColor;font-weight:bold;color:#000">0</div>
<div class="a" style="right:368.30px;top:507.58px;font-family:'Liberation Sans',sans-serif;font-size:6.15px;line-height:7.38px;transform:scaleY(1.15);transform-origin:0 5.82px;-webkit-text-stroke:0.1px currentColor;font-weight:bold;color:#000">1</div>
<div class="a" style="right:290.00px;top:507.58px;font-family:'Liberation Sans',sans-serif;font-size:6.15px;line-height:7.38px;transform:scaleY(1.15);transform-origin:0 5.82px;-webkit-text-stroke:0.1px currentColor;font-weight:bold;color:#000">2</div>
<div class="a" style="right:219.40px;top:507.58px;font-family:'Liberation Sans',sans-serif;font-size:6.15px;line-height:7.38px;transform:scaleY(1.15);transform-origin:0 5.82px;-webkit-text-stroke:0.1px currentColor;font-weight:bold;color:#000">3</div>
<div class="a" style="right:143.20px;top:507.58px;font-family:'Liberation Sans',sans-serif;font-size:6.15px;line-height:7.38px;transform:scaleY(1.15);transform-origin:0 5.82px;-webkit-text-stroke:0.1px currentColor;font-weight:bold;color:#000">4</div>
<div style="position:absolute;left:448.7px;top:517.6px;width:457.80px;height:1.00px;background:#333"></div>
<div style="position:absolute;left:448.7px;top:518.6px;width:457.80px;height:13.45px;background:#f5f5f5"></div>
<div class="a" style="right:507.30px;top:521.78px;font-family:'Liberation Sans',sans-serif;font-size:6.15px;line-height:7.38px;transform:scaleY(1.15);transform-origin:0 5.82px;-webkit-text-stroke:0.1px currentColor;font-weight:bold;color:#000">Employee_Name</div>
<div class="a" style="right:437.00px;top:521.78px;font-family:'Liberation Sans',sans-serif;font-size:6.15px;line-height:7.38px;transform:scaleY(1.15);transform-origin:0 5.82px;-webkit-text-stroke:0.1px currentColor;color:#000">Adinolfi, Wilson K</div>
<div class="a" style="right:368.30px;top:521.78px;font-family:'Liberation Sans',sans-serif;font-size:6.15px;line-height:7.38px;transform:scaleY(1.15);transform-origin:0 5.82px;-webkit-text-stroke:0.1px currentColor;color:#000">Ait Sidi, Karthikeyan</div>
<div class="a" style="right:290.00px;top:521.78px;font-family:'Liberation Sans',sans-serif;font-size:6.15px;line-height:7.38px;transform:scaleY(1.15);transform-origin:0 5.82px;-webkit-text-stroke:0.1px currentColor;color:#000">Akinkuolie, Sarah</div>
<div class="a" style="right:219.40px;top:521.78px;font-family:'Liberation Sans',sans-serif;font-size:6.15px;line-height:7.38px;transform:scaleY(1.15);transform-origin:0 5.82px;-webkit-text-stroke:0.1px currentColor;color:#000">Alagbe,Trina</div>
<div class="a" style="right:143.20px;top:521.78px;font-family:'Liberation Sans',sans-serif;font-size:6.15px;line-height:7.38px;transform:scaleY(1.15);transform-origin:0 5.82px;-webkit-text-stroke:0.1px currentColor;color:#000">Anderson, Carol</div>
<div class="a" style="right:507.30px;top:535.23px;font-family:'Liberation Sans',sans-serif;font-size:6.15px;line-height:7.38px;transform:scaleY(1.15);transform-origin:0 5.82px;-webkit-text-stroke:0.1px currentColor;font-weight:bold;color:#000">EmpID</div>
<div class="a" style="right:437.00px;top:535.23px;font-family:'Liberation Sans',sans-serif;font-size:6.15px;line-height:7.38px;transform:scaleY(1.15);transform-origin:0 5.82px;-webkit-text-stroke:0.1px currentColor;color:#000">10026</div>
<div class="a" style="right:368.30px;top:535.23px;font-family:'Liberation Sans',sans-serif;font-size:6.15px;line-height:7.38px;transform:scaleY(1.15);transform-origin:0 5.82px;-webkit-text-stroke:0.1px currentColor;color:#000">10084</div>
<div class="a" style="right:290.00px;top:535.23px;font-family:'Liberation Sans',sans-serif;font-size:6.15px;line-height:7.38px;transform:scaleY(1.15);transform-origin:0 5.82px;-webkit-text-stroke:0.1px currentColor;color:#000">10196</div>
<div class="a" style="right:219.40px;top:535.23px;font-family:'Liberation Sans',sans-serif;font-size:6.15px;line-height:7.38px;transform:scaleY(1.15);transform-origin:0 5.82px;-webkit-text-stroke:0.1px currentColor;color:#000">10088</div>
<div class="a" style="right:143.20px;top:535.23px;font-family:'Liberation Sans',sans-serif;font-size:6.15px;line-height:7.38px;transform:scaleY(1.15);transform-origin:0 5.82px;-webkit-text-stroke:0.1px currentColor;color:#000">10069</div>
<div style="position:absolute;left:448.7px;top:545.5px;width:457.80px;height:13.45px;background:#f5f5f5"></div>
<div class="a" style="right:507.30px;top:548.68px;font-family:'Liberation Sans',sans-serif;font-size:6.15px;line-height:7.38px;transform:scaleY(1.15);transform-origin:0 5.82px;-webkit-text-stroke:0.1px currentColor;font-weight:bold;color:#000">DeptID</div>
<div class="a" style="right:437.00px;top:548.68px;font-family:'Liberation Sans',sans-serif;font-size:6.15px;line-height:7.38px;transform:scaleY(1.15);transform-origin:0 5.82px;-webkit-text-stroke:0.1px currentColor;color:#000">5</div>
<div class="a" style="right:368.30px;top:548.68px;font-family:'Liberation Sans',sans-serif;font-size:6.15px;line-height:7.38px;transform:scaleY(1.15);transform-origin:0 5.82px;-webkit-text-stroke:0.1px currentColor;color:#000">3</div>
<div class="a" style="right:290.00px;top:548.68px;font-family:'Liberation Sans',sans-serif;font-size:6.15px;line-height:7.38px;transform:scaleY(1.15);transform-origin:0 5.82px;-webkit-text-stroke:0.1px currentColor;color:#000">5</div>
<div class="a" style="right:219.40px;top:548.68px;font-family:'Liberation Sans',sans-serif;font-size:6.15px;line-height:7.38px;transform:scaleY(1.15);transform-origin:0 5.82px;-webkit-text-stroke:0.1px currentColor;color:#000">5</div>
<div class="a" style="right:143.20px;top:548.68px;font-family:'Liberation Sans',sans-serif;font-size:6.15px;line-height:7.38px;transform:scaleY(1.15);transform-origin:0 5.82px;-webkit-text-stroke:0.1px currentColor;color:#000">5</div>
<div class="a" style="right:507.30px;top:562.13px;font-family:'Liberation Sans',sans-serif;font-size:6.15px;line-height:7.38px;transform:scaleY(1.15);transform-origin:0 5.82px;-webkit-text-stroke:0.1px currentColor;font-weight:bold;color:#000">Salary</div>
<div class="a" style="right:437.00px;top:562.13px;font-family:'Liberation Sans',sans-serif;font-size:6.15px;line-height:7.38px;transform:scaleY(1.15);transform-origin:0 5.82px;-webkit-text-stroke:0.1px currentColor;color:#000">62506</div>
<div class="a" style="right:368.30px;top:562.13px;font-family:'Liberation Sans',sans-serif;font-size:6.15px;line-height:7.38px;transform:scaleY(1.15);transform-origin:0 5.82px;-webkit-text-stroke:0.1px currentColor;color:#000">104437</div>
<div class="a" style="right:290.00px;top:562.13px;font-family:'Liberation Sans',sans-serif;font-size:6.15px;line-height:7.38px;transform:scaleY(1.15);transform-origin:0 5.82px;-webkit-text-stroke:0.1px currentColor;color:#000">64955</div>
<div class="a" style="right:219.40px;top:562.13px;font-family:'Liberation Sans',sans-serif;font-size:6.15px;line-height:7.38px;transform:scaleY(1.15);transform-origin:0 5.82px;-webkit-text-stroke:0.1px currentColor;color:#000">64991</div>
<div class="a" style="right:143.20px;top:562.13px;font-family:'Liberation Sans',sans-serif;font-size:6.15px;line-height:7.38px;transform:scaleY(1.15);transform-origin:0 5.82px;-webkit-text-stroke:0.1px currentColor;color:#000">50825</div>
<div style="position:absolute;left:448.7px;top:572.4px;width:457.80px;height:13.45px;background:#f5f5f5"></div>
<div class="a" style="right:507.30px;top:575.58px;font-family:'Liberation Sans',sans-serif;font-size:6.15px;line-height:7.38px;transform:scaleY(1.15);transform-origin:0 5.82px;-webkit-text-stroke:0.1px currentColor;font-weight:bold;color:#000">PositionID</div>
<div class="a" style="right:437.00px;top:575.58px;font-family:'Liberation Sans',sans-serif;font-size:6.15px;line-height:7.38px;transform:scaleY(1.15);transform-origin:0 5.82px;-webkit-text-stroke:0.1px currentColor;color:#000">19</div>
<div class="a" style="right:368.30px;top:575.58px;font-family:'Liberation Sans',sans-serif;font-size:6.15px;line-height:7.38px;transform:scaleY(1.15);transform-origin:0 5.82px;-webkit-text-stroke:0.1px currentColor;color:#000">27</div>
<div class="a" style="right:290.00px;top:575.58px;font-family:'Liberation Sans',sans-serif;font-size:6.15px;line-height:7.38px;transform:scaleY(1.15);transform-origin:0 5.82px;-webkit-text-stroke:0.1px currentColor;color:#000">20</div>
<div class="a" style="right:219.40px;top:575.58px;font-family:'Liberation Sans',sans-serif;font-size:6.15px;line-height:7.38px;transform:scaleY(1.15);transform-origin:0 5.82px;-webkit-text-stroke:0.1px currentColor;color:#000">19</div>
<div class="a" style="right:143.20px;top:575.58px;font-family:'Liberation Sans',sans-serif;font-size:6.15px;line-height:7.38px;transform:scaleY(1.15);transform-origin:0 5.82px;-webkit-text-stroke:0.1px currentColor;color:#000">19</div>
<div class="a" style="right:507.30px;top:589.03px;font-family:'Liberation Sans',sans-serif;font-size:6.15px;line-height:7.38px;transform:scaleY(1.15);transform-origin:0 5.82px;-webkit-text-stroke:0.1px currentColor;font-weight:bold;color:#000">Position</div>
<div class="a" style="right:437.00px;top:589.03px;font-family:'Liberation Sans',sans-serif;font-size:6.15px;line-height:7.38px;transform:scaleY(1.15);transform-origin:0 5.82px;-webkit-text-stroke:0.1px currentColor;color:#000">Production Technician I</div>
<div class="a" style="right:368.30px;top:589.03px;font-family:'Liberation Sans',sans-serif;font-size:6.15px;line-height:7.38px;transform:scaleY(1.15);transform-origin:0 5.82px;-webkit-text-stroke:0.1px currentColor;color:#000">Sr. DBA</div>
<div class="a" style="right:290.00px;top:589.03px;font-family:'Liberation Sans',sans-serif;font-size:6.15px;line-height:7.38px;transform:scaleY(1.15);transform-origin:0 5.82px;-webkit-text-stroke:0.1px currentColor;color:#000">Production Technician II</div>
<div class="a" style="right:219.40px;top:589.03px;font-family:'Liberation Sans',sans-serif;font-size:6.15px;line-height:7.38px;transform:scaleY(1.15);transform-origin:0 5.82px;-webkit-text-stroke:0.1px currentColor;color:#000">Production Technician I</div>
<div class="a" style="right:143.20px;top:589.03px;font-family:'Liberation Sans',sans-serif;font-size:6.15px;line-height:7.38px;transform:scaleY(1.15);transform-origin:0 5.82px;-webkit-text-stroke:0.1px currentColor;color:#000">Production Technician I</div></div><!--nbend-->

<svg style="position:absolute;left:0;top:595px" width="5" height="5" viewBox="0 0 5 5"><path d="M0 0 Q0 5 5 5 H0 Z" fill="#000"/></svg>
<svg style="position:absolute;left:1042px;top:595px" width="5" height="5" viewBox="0 0 5 5"><path d="M5 0 Q5 5 0 5 H5 Z" fill="#1a1c30"/></svg>
</body></html>
